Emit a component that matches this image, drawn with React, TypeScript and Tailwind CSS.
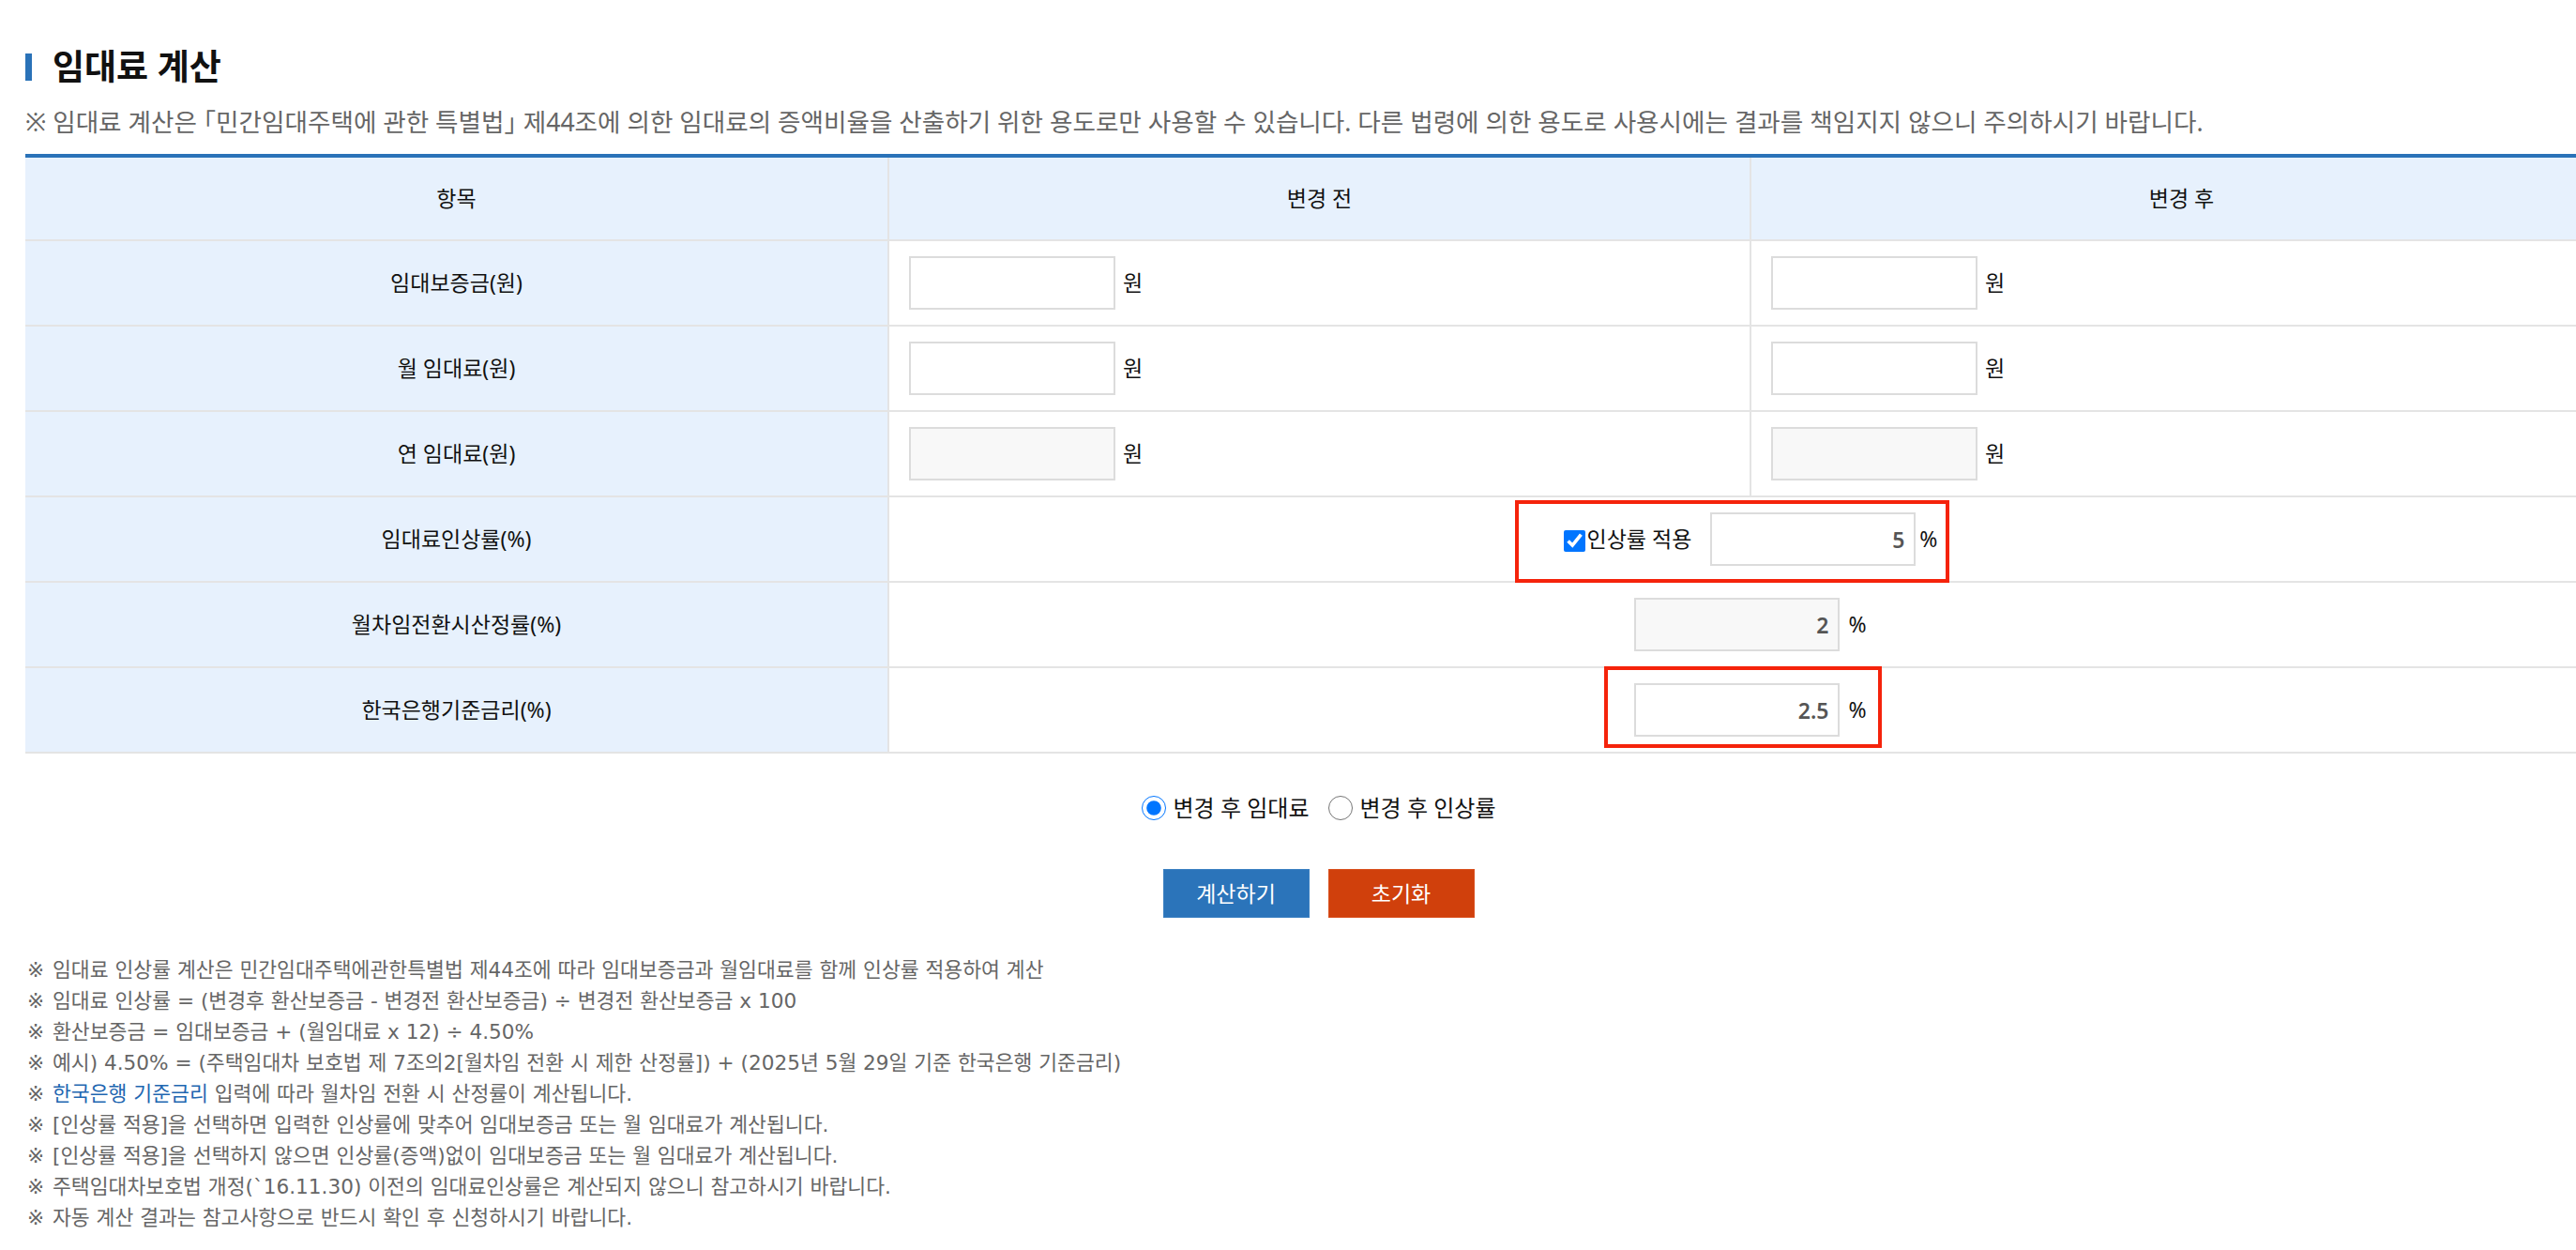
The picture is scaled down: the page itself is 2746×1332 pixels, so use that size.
import React, { useState } from "react";

const FONT = "font-['Noto_Sans','Noto_Sans_CJK_KR',sans-serif]";

// one "원" input cell (변경 전 / 변경 후 columns)
function WonInput({ readOnly }: { readOnly?: boolean }) {
    return (
        <div className="flex items-center gap-[8px] pl-[21px]">
            <input
                type="text"
                readOnly={readOnly}
                className={`w-[220px] h-[57px] border-2 border-[#dcdcdc] outline-none px-3 text-right text-[23px] ${readOnly ? "bg-[#f8f8f8]" : "bg-white"}`}
            />
            <span className="text-[23px] text-[#111]">원</span>
        </div>
    );
}

function PercentInput({ value, readOnly }: { value: string; readOnly?: boolean }) {
    return (
        <input
            type="text"
            readOnly={readOnly}
            defaultValue={value}
            className={`w-[219px] h-[57px] border-2 border-[#dcdcdc] outline-none pr-[10px] text-right text-[23px] font-semibold text-[#555] ${readOnly ? "bg-[#f8f8f8]" : "bg-white"}`}
        />
    );
}

function Label({ children }: { children: React.ReactNode }) {
    return (
        <div className="flex items-center justify-center bg-[#e7f1fd] border-b-2 border-[#e4e4e4] text-[23px] text-[#111]">
            {children}
        </div>
    );
}

function Cell({ children, span }: { children?: React.ReactNode; span?: boolean }) {
    return (
        <div
            className={`flex items-center border-b-2 border-l-2 border-[#e4e4e4] ${span ? "col-span-2 justify-center" : ""}`}
        >
            {children}
        </div>
    );
}

const notes = [
    "임대료 인상률 계산은 민간임대주택에관한특별법 제44조에 따라 임대보증금과 월임대료를 함께 인상률 적용하여 계산",
    "임대료 인상률 = (변경후 환산보증금 - 변경전 환산보증금) ÷ 변경전 환산보증금 x 100",
    "환산보증금 = 임대보증금 + (월임대료 x 12) ÷ 4.50%",
    "예시) 4.50% = (주택임대차 보호법 제 7조의2[월차임 전환 시 제한 산정률]) + (2025년 5월 29일 기준 한국은행 기준금리)",
    "LINK",
    "[인상률 적용]을 선택하면 입력한 인상률에 맞추어 임대보증금 또는 월 임대료가 계산됩니다.",
    "[인상률 적용]을 선택하지 않으면 인상률(증액)없이 임대보증금 또는 월 임대료가 계산됩니다.",
    "주택임대차보호법 개정(`16.11.30) 이전의 임대료인상률은 계산되지 않으니 참고하시기 바랍니다.",
    "자동 계산 결과는 참고사항으로 반드시 확인 후 신청하시기 바랍니다.",
];

export default function App() {
    const [mode, setMode] = useState("rent");
    const [apply, setApply] = useState(true);

    return (
        <div className={`w-full min-h-[1332px] overflow-hidden bg-white ${FONT}`}>
            <div className="w-[2757px] ml-[27px] pt-[51px] pb-[20px]">
                {/* Title */}
                <div className="flex items-center gap-[22px] h-[40px]">
                    <div className="w-[7px] h-[29px] bg-[#2a72b8]" />
                    <h1 className="text-[37px] font-bold text-[#111] leading-[40px]">임대료 계산</h1>
                </div>
                <p className="mt-[22px] text-[26.6px] leading-[34px] text-[#666] [font-feature-settings:'halt']">
                    ※ 임대료 계산은 「민간임대주택에 관한 특별법」 제44조에 의한 임대료의 증액비율을 산출하기 위한 용도로만 사용할 수 있습니다. 다른 법령에 의한 용도로 사용시에는 결과를 책임지지 않으니 주의하시기 바랍니다.
                </p>

                {/* Table */}
                <div className="mt-[17px] border-t-4 border-[#2a72b8] grid grid-cols-[919px_919px_919px] grid-rows-[89px_repeat(6,91px)]">
                    <Label>항목</Label>
                    <div className="flex items-center justify-center bg-[#e7f1fd] border-b-2 border-l-2 border-[#e4e4e4] text-[23px] text-[#111]">변경 전</div>
                    <div className="flex items-center justify-center bg-[#e7f1fd] border-b-2 border-l-2 border-[#e4e4e4] text-[23px] text-[#111]">변경 후</div>

                    <Label>임대보증금(원)</Label>
                    <Cell><WonInput /></Cell>
                    <Cell><WonInput /></Cell>

                    <Label>월 임대료(원)</Label>
                    <Cell><WonInput /></Cell>
                    <Cell><WonInput /></Cell>

                    <Label>연 임대료(원)</Label>
                    <Cell><WonInput readOnly /></Cell>
                    <Cell><WonInput readOnly /></Cell>

                    <Label>임대료인상률(%)</Label>
                    <Cell span>
                        <div className="relative flex items-center">
                            <input
                                type="checkbox"
                                checked={apply}
                                onChange={(e) => setApply(e.target.checked)}
                                className="w-[23px] h-[23px] mt-[3px]"
                            />
                            <span className="ml-[2px] text-[23px] text-[#111]">인상률 적용</span>
                            <div className="ml-[20px]">
                                <PercentInput value="5" />
                            </div>
                            <span className="ml-[4px] text-[23px] text-[#111]">%</span>
                            <div className="absolute -left-[52px] -right-[13px] -top-[13px] -bottom-[18px] border-4 border-[#f5230b] pointer-events-none" />
                        </div>
                    </Cell>

                    <Label>월차임전환시산정률(%)</Label>
                    <Cell span>
                        <div className="flex items-center gap-[9px]">
                            <PercentInput value="2" readOnly />
                            <span className="text-[23px] text-[#111]">%</span>
                        </div>
                    </Cell>

                    <Label>한국은행기준금리(%)</Label>
                    <Cell span>
                        <div className="relative flex items-center gap-[9px]">
                            <PercentInput value="2.5" />
                            <span className="text-[23px] text-[#111]">%</span>
                            <div className="absolute -left-[32px] -right-[16px] -top-[18px] -bottom-[12px] border-4 border-[#f5230b] pointer-events-none" />
                        </div>
                    </Cell>
                </div>

                {/* Radios */}
                <div className="mt-[41px] flex items-center justify-center h-[34px] text-[24px] text-[#111]">
                    <label className="flex items-center gap-[8px]">
                        <input
                            type="radio"
                            name="mode"
                            checked={mode === "rent"}
                            onChange={() => setMode("rent")}
                            className="w-[26px] h-[26px]"
                        />
                        변경 후 임대료
                    </label>
                    <label className="flex items-center gap-[8px] ml-[20px]">
                        <input
                            type="radio"
                            name="mode"
                            checked={mode === "rate"}
                            onChange={() => setMode("rate")}
                            className="w-[26px] h-[26px]"
                        />
                        변경 후 인상률
                    </label>
                </div>

                {/* Buttons */}
                <div className="mt-[48px] flex justify-center gap-[20px]">
                    <button className="w-[156px] h-[52px] bg-[#2b74ba] border border-[#3b80c2] text-white text-[23px]">계산하기</button>
                    <button className="w-[156px] h-[52px] bg-[#d0400c] border border-[#d9501e] text-white text-[23px]">초기화</button>
                </div>

                {/* Notes */}
                <ul className="mt-[39px] text-[21.6px] leading-[33px] text-[#666] font-['DejaVu_Sans','Noto_Sans_CJK_KR',sans-serif]">
                    {notes.map((n, i) => (
                        <li key={i} className="flex pl-[2px]">
                            <span className="w-[27px] shrink-0">※</span>
                            {n === "LINK" ? (
                                <span>
                                    <span className="text-[#1f67b1]">한국은행 기준금리</span> 입력에 따라 월차임 전환 시 산정률이 계산됩니다.
                                </span>
                            ) : (
                                <span>{n}</span>
                            )}
                        </li>
                    ))}
                </ul>
            </div>
        </div>
    );
}
